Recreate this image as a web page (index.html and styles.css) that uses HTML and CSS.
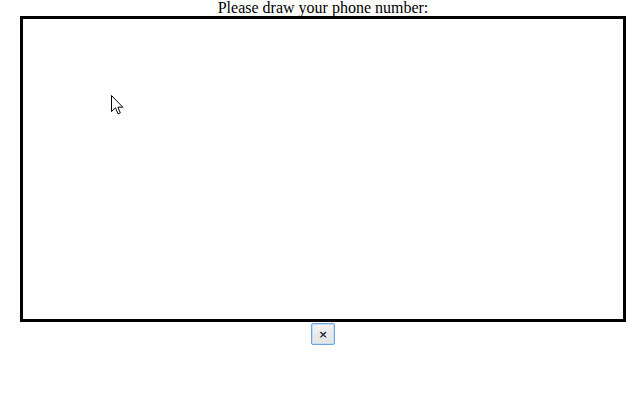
FILE: index.html
```html
<!DOCTYPE html>
<html>
<head>
<meta charset="utf-8">
<link rel="stylesheet" href="styles.css">
</head>
<body>
<div class="wrap">
  <div class="prompt">Please draw your phone number:</div>
  <div class="pad"></div>
  <button class="clear">×</button>
</div>
<svg class="cursor" width="13" height="20" viewBox="0 0 13 20"><path d="M0.5 0.5 L0.5 16.5 L4.5 12.8 L7 18.8 L9.3 17.8 L6.9 12.2 L11.8 12.2 Z" fill="#fff" stroke="#000" stroke-width="1" stroke-linejoin="miter"/></svg>
</body>
</html>
```
FILE: styles.css
```css
html, body { margin: 0; padding: 0; background: #fff; }
body { font-family: "Liberation Serif", "Times New Roman", serif; font-size: 16px; color: #000; }
.wrap { display: flex; flex-direction: column; align-items: center; padding-left: 3px; }
.prompt { line-height: 16px; height: 16px; }
.pad { width: 600px; height: 300px; border: 3px solid #000; background: #fff; }
.clear {
  margin-top: 1px; width: 24px; height: 22px; padding: 0;
  font-family: "DejaVu Sans", sans-serif; font-size: 11px; font-weight: bold; line-height: 1;
  border: 1px solid #6fa3de; border-radius: 2px;
  box-shadow: inset 0 0 0 1px #c4dcf4;
  background: linear-gradient(#f2f2f2, #e3e3e3);
  color: #1a2a40;
}
.cursor { position: absolute; left: 111px; top: 95px; }
```
